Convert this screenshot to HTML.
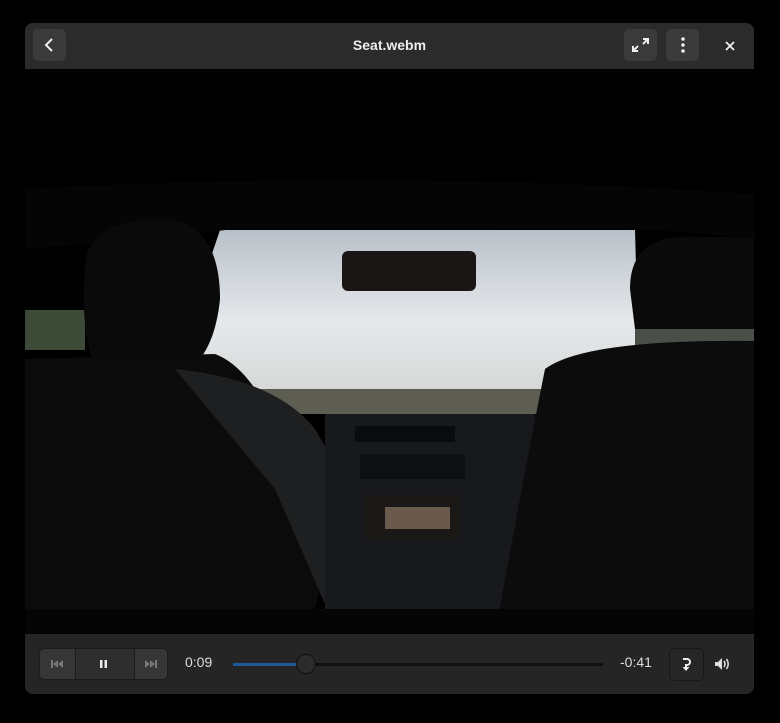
<!DOCTYPE html>
<html><head><style>
body{margin:0;width:780px;height:723px;background:#000;font-family:"Liberation Sans",sans-serif;overflow:hidden;position:relative}
.win{position:absolute;left:25px;top:23px;width:729px;height:671px;background:#242424;border-radius:8px;overflow:hidden}
.hdr{position:absolute;left:0;top:0;width:729px;height:46px;background:#2b2b2b}
.btn{position:absolute;top:6px;width:33px;height:32px;background:#3a3a3a;border-radius:5px}
.title{position:absolute;left:0;width:729px;top:14px;text-align:center;color:#eee;font-weight:bold;font-size:14px}
.vid{position:absolute;left:0;top:46px;width:729px;height:565px;background:#000}
.ctl{position:absolute;left:0;top:611px;width:729px;height:60px;background:#252525}
.t{position:absolute;top:20px;color:#ddd;font-size:14px}
</style></head><body>
<div class="win">
 <div class="hdr">
  <div class="btn" style="left:8px"><svg width="33" height="32"><path d="M19 10l-6 6 6 6" stroke="#eee" stroke-width="2" fill="none"/></svg></div>
  <div class="title">Seat.webm</div>
  <div class="btn" style="left:599px"><svg width="33" height="32"><path d="M19 10h5v5M24 10l-5 5M14 22H9v-5M9 22l5-5" stroke="#eee" stroke-width="2" fill="none"/></svg></div>
  <div class="btn" style="left:641px"><svg width="33" height="32"><circle cx="17" cy="10" r="1.8" fill="#eee"/><circle cx="17" cy="16" r="1.8" fill="#eee"/><circle cx="17" cy="22" r="1.8" fill="#eee"/></svg></div>
  <svg style="position:absolute;left:700px;top:18px" width="10" height="10"><path d="M1 1l8 8M9 1l-8 8" stroke="#eee" stroke-width="1.8"/></svg>
 </div>
 <div class="vid">
  <svg width="729" height="565">
   <defs><linearGradient id="sky" x1="0" y1="0" x2="0" y2="1"><stop offset="0" stop-color="#b8c0c8"/><stop offset="0.5" stop-color="#e6e9ec"/><stop offset="1" stop-color="#d0d2d0"/></linearGradient></defs>
   <rect width="729" height="565" fill="#000"/>
   <polygon points="195,161 610,161 615,345 160,345 165,250" fill="url(#sky)"/>
   <rect x="160" y="320" width="370" height="25" fill="#5e5d52"/>
   <rect x="0" y="241" width="60" height="40" fill="#3e4a38"/>
   <rect x="610" y="252" width="119" height="25" fill="#4a4f48"/>
   <path d="M0 120 Q360 100 729 125 L729 170 Q600 155 470 160 L210 160 Q120 170 0 180Z" fill="#050505"/>
   <rect x="317" y="182" width="134" height="40" rx="6" fill="#1a1616"/>
   <path d="M60 200 Q60 150 140 150 Q195 155 195 230 Q190 280 165 300 L70 300 Q55 260 60 200Z" fill="#0b0a0a"/>
   <path d="M0 290 L190 285 Q230 300 260 380 L300 470 Q300 520 280 565 L0 565Z" fill="#0b0b0b"/>
   <path d="M150 300 Q250 310 290 360 Q330 430 360 470 L385 500 L370 530 L300 535 L250 420Z" fill="#1e1f20"/>
   <path d="M300 345 L510 345 L540 565 L300 565Z" fill="#17191c"/>
   <rect x="330" y="357" width="100" height="16" fill="#0a0b0c"/>
   <rect x="335" y="385" width="105" height="25" fill="#0e0f10"/>
   <rect x="340" y="425" width="95" height="45" fill="#1a1816"/>
   <rect x="360" y="438" width="65" height="22" fill="#6a5a4c"/>
   <path d="M605 220 Q605 168 660 168 L729 168 L729 260 L610 260Z" fill="#0a0a0a"/>
   <path d="M520 300 Q560 270 729 272 L729 565 L470 565 Q500 400 520 300Z" fill="#0c0c0c"/>
   <rect x="0" y="540" width="729" height="25" fill="#050505"/>
  </svg>
 </div>
 <div class="ctl">
  <div style="position:absolute;left:14px;top:14px;width:129px;height:32px;border-radius:5px;background:#363636;border:1px solid #1c1c1c;box-sizing:border-box">
   <div style="position:absolute;left:35px;top:0;width:58px;height:30px;background:#2e2e2e;border-left:1px solid #1c1c1c;border-right:1px solid #1c1c1c"></div>
   <svg style="position:absolute;left:11px;top:10px" width="13" height="10"><rect x="0" y="1" width="2" height="8" fill="#777"/><path d="M7 1v8L2 5zM12 1v8L7 5z" fill="#777"/></svg>
   <svg style="position:absolute;left:59px;top:10px" width="10" height="10"><rect x="1" y="1" width="2.5" height="8" fill="#eee"/><rect x="5.5" y="1" width="2.5" height="8" fill="#eee"/></svg>
   <svg style="position:absolute;left:104px;top:10px" width="13" height="10"><path d="M1 1v8l5-4zM6 1v8l5-4z" fill="#777"/><rect x="11" y="1" width="2" height="8" fill="#777"/></svg>
  </div>
  <div class="t" style="left:160px">0:09</div>
  <div style="position:absolute;left:208px;top:29px;width:370px;height:3px;background:#101010;border-radius:2px"></div>
  <div style="position:absolute;left:208px;top:29px;width:72px;height:3px;background:#1e5a9c"></div>
  <div style="position:absolute;left:271px;top:20px;width:18px;height:18px;border-radius:50%;background:#2c2c2c;border:1px solid #111"></div>
  <div class="t" style="left:595px">-0:41</div>
  <div style="position:absolute;left:644px;top:14px;width:35px;height:33px;border-radius:5px;background:#262626;border:1px solid #181818;box-sizing:border-box">
   <svg style="position:absolute;left:10px;top:8px" width="14" height="16"><path d="M3 2h4a3 3 0 0 1 0 6H6v5" stroke="#eee" stroke-width="2" fill="none"/><path d="M2.5 10l3.5 4 3.5-4z" fill="#eee"/></svg>
  </div>
  <svg style="position:absolute;left:689px;top:23px" width="18" height="14"><path d="M1 5h3l4-4v12l-4-4H1z" fill="#ddd"/><path d="M10 4q2 3 0 6M12.5 2q3.5 5 0 10" stroke="#ddd" stroke-width="1.6" fill="none"/></svg>
 </div>
</div>
</body></html>
